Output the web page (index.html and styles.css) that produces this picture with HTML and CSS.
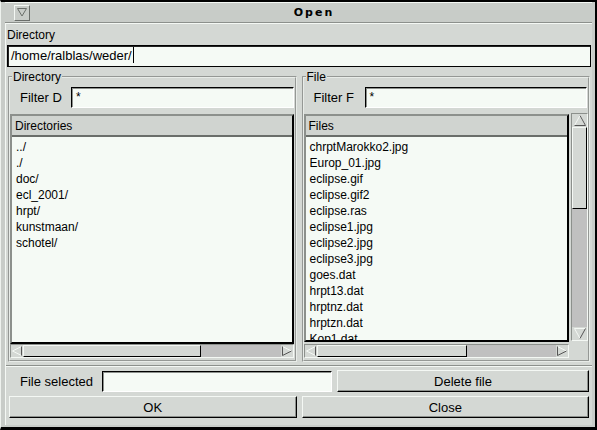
FILE: index.html
```html
<!DOCTYPE html>
<html lang="en">
  <head>
    <meta charset="UTF-8" />
    <meta name="viewport" content="width=device-width, initial-scale=1.0" />
    <title>Open</title>
    <link rel="stylesheet" href="styles.css">
  </head>
  <body>
    <div class="window">
      <div class="titlebar">
        <span class="menu-btn">
          <svg width="10" height="9" viewBox="0 0 10 9">
            <path d="M0.5 0.5 H9.5 L5 8 Z" fill="none" stroke="#6a6e6a" />
          </svg>
        </span>
        <span class="title">Open</span>
      </div>

      <div class="content">
        <div class="caption">Directory</div>
        <div class="entry path">/home/ralblas/weder/<span class="caret"></span></div>

        <div class="panes">
          <fieldset class="group">
            <legend>Directory</legend>
            <div class="filter">
              <span class="filter-label">Filter D</span>
              <div class="entry">*</div>
            </div>
            <div class="listbox">
              <div class="list">
                <div class="list-head">Directories</div>
                <div class="items">
                  <div>../</div>
                  <div>./</div>
                  <div>doc/</div>
                  <div>ecl_2001/</div>
                  <div>hrpt/</div>
                  <div>kunstmaan/</div>
                  <div>schotel/</div>
                </div>
              </div>
              <div class="hscroll">
                <span class="arrow left"></span>
                <span class="thumb" style="width: 178px"></span>
                <span class="trough"></span>
                <span class="arrow right"></span>
              </div>
            </div>
          </fieldset>

          <fieldset class="group">
            <legend>File</legend>
            <div class="filter">
              <span class="filter-label">Filter F</span>
              <div class="entry">*</div>
            </div>
            <div class="listbox with-v">
              <div class="list-row">
                <div class="list">
                  <div class="list-head">Files</div>
                  <div class="items">
                    <div>chrptMarokko2.jpg</div>
                    <div>Europ_01.jpg</div>
                    <div>eclipse.gif</div>
                    <div>eclipse.gif2</div>
                    <div>eclipse.ras</div>
                    <div>eclipse1.jpg</div>
                    <div>eclipse2.jpg</div>
                    <div>eclipse3.jpg</div>
                    <div>goes.dat</div>
                    <div>hrpt13.dat</div>
                    <div>hrptnz.dat</div>
                    <div>hrptzn.dat</div>
                    <div>Kop1.dat</div>
                  </div>
                </div>
                <div class="vscroll">
                  <span class="arrow up"></span>
                  <span class="thumb" style="height: 82px"></span>
                  <span class="trough"></span>
                  <span class="arrow down"></span>
                </div>
              </div>
              <div class="hscroll">
                <span class="arrow left"></span>
                <span class="thumb" style="width: 150px"></span>
                <span class="trough"></span>
                <span class="arrow right"></span>
              </div>
            </div>
          </fieldset>
        </div>

        <div class="actions">
          <div class="action-row">
            <span class="filter-label selected-label">File selected</span>
            <div class="entry selected"></div>
            <button class="btn delete">Delete file</button>
          </div>
          <div class="action-row">
            <button class="btn">OK</button>
            <button class="btn">Close</button>
          </div>
        </div>
      </div>
    </div>
  </body>
</html>
```

FILE: styles.css
```css
* {
  box-sizing: border-box;
  margin: 0;
  padding: 0;
}
body {
  font-family: "Liberation Sans", Arial, Helvetica, sans-serif;
  font-size: 12px;
  color: #000;
  background-color: #000;
  width: 597px;
  height: 430px;
  overflow: hidden;
}

/* outer window frame */
.window {
  width: 597px;
  height: 430px;
  background-color: #c8ccc8;
  border-top: 2px solid #000;
  border-right: 2px solid #000;
  border-bottom: 3px solid #000;
  border-left: 1px solid #eef2ee;
  padding: 0 3px 2px 4px;
  display: flex;
  flex-direction: column;
}

.titlebar {
  height: 21px;
  display: flex;
  align-items: center;
  border-top: 1px solid #f4f8f4;
  border-bottom: 1px solid #8c908c;
  box-shadow: 0 1px 0 #f4f8f4;
}
.menu-btn {
  width: 16px;
  height: 16px;
  margin-left: 9px;
  border-top: 1px solid #f4f8f4;
  border-left: 1px solid #f4f8f4;
  border-right: 1px solid #6a6e6a;
  border-bottom: 1px solid #6a6e6a;
  display: flex;
  align-items: center;
  justify-content: center;
}
.title {
  flex: 1;
  text-align: center;
  font-family: "DejaVu Sans", sans-serif;
  font-weight: bold;
  font-size: 11px;
  letter-spacing: 2px;
  padding-left: 6px;
}

.content {
  flex: 1;
  background-color: #d4d8d4;
  border-left: 1px solid #f4f8f4;
  margin-top: 1px;
  display: flex;
  flex-direction: column;
  padding-top: 3px;
}
.caption {
  height: 18px;
  line-height: 16px;
  padding-left: 1px;
}

/* text entries */
.entry {
  height: 21px;
  background-color: #f5faf5;
  border-top: 1px solid #000;
  border-left: 1px solid #000;
  border-right: 1px solid #fff;
  border-bottom: 1px solid #fff;
  box-shadow: inset 1px 1px 0 #8c908c;
  line-height: 19px;
  padding-left: 4px;
  font-size: 12px;
  white-space: nowrap;
}
.entry.path {
  height: 22px;
  border: 1px solid #000;
  box-shadow: inset 1px 1px 0 #222;
  font-size: 13px;
  line-height: 20px;
  padding-left: 3px;
  margin-right: 1px;
  margin-left: 1px;
}
.caret {
  display: inline-block;
  width: 1px;
  height: 16px;
  background-color: #000;
  vertical-align: -3px;
  margin-left: 1px;
}

.panes {
  display: flex;
  gap: 5px;
  padding: 3px 2px 0 2px;
}
.group {
  flex: 1;
  border: 2px groove #e8ece8;
  min-width: 0;
  padding: 0;
  height: 292px;
}
.group legend {
  margin-left: 2px;
  padding: 0 1px;
  line-height: 14px;
  font-size: 12px;
}
.filter {
  display: flex;
  align-items: center;
  height: 21px;
  margin-top: 3px;
  padding-left: 10px;
}
.filter-label {
  width: 51px;
  font-size: 13px;
}
.filter .entry {
  flex: 1;
  margin-right: 1px;
}

.listbox {
  margin-top: 6px;
  display: flex;
  flex-direction: column;
}
.list-row {
  display: flex;
}
.list {
  height: 230px;
  border-top: 2px solid #8c908c;
  border-left: 2px solid #8c908c;
  border-right: 2px solid #000;
  border-bottom: 2px solid #000;
  background-color: #f5faf5;
  overflow: hidden;
}
.listbox > .list {
  flex: none;
  margin-right: 1px;
}
.list-row .list {
  flex: 1;
  height: 228px;
}
.list-head {
  height: 21px;
  line-height: 20px;
  padding-left: 3px;
  background-color: #d0d4d0;
  border-bottom: 2px solid #6a6e6a;
  font-size: 12px;
}
.items {
  padding: 2px 0 0 4px;
  line-height: 16px;
  font-size: 12px;
}

/* scrollbars */
.hscroll {
  height: 14px;
  margin-right: 1px;
  display: flex;
  border: 1px solid #f4f8f4;
  border-top-color: #8c908c;
  border-left-color: #8c908c;
  background-color: #c0c0c0;
}
.with-v .hscroll {
  margin-top: 2px;
  margin-right: 19px;
}
.vscroll {
  width: 17px;
  margin-left: 2px;
  margin-top: -1px;
  height: 228px;
  display: flex;
  flex-direction: column;
  border: 1px solid #f4f8f4;
  border-top-color: #8c908c;
  border-left-color: #8c908c;
  background-color: #c0c0c0;
}
.thumb {
  background-color: #d4d8d4;
  border-top: 1px solid #f4f8f4;
  border-left: 1px solid #f4f8f4;
  border-right: 1px solid #000;
  border-bottom: 1px solid #000;
}
.trough {
  flex: 1;
}
.arrow {
  width: 12px;
  height: 12px;
  background-color: #d4d8d4;
  position: relative;
  flex: none;
}
.vscroll .arrow {
  width: 15px;
  height: 13px;
}
.arrow::after {
  content: "";
  position: absolute;
  inset: 0;
  background-repeat: no-repeat;
  background-position: center;
}
.arrow.left::after {
  background-image: url("data:image/svg+xml,%3Csvg xmlns='http://www.w3.org/2000/svg' width='10' height='10'%3E%3Cpath d='M9.5 0.5 L0.5 5 L9.5 9.5' fill='none' stroke='%23f4f8f4'/%3E%3Cpath d='M9.5 0.5 V9.5' stroke='%23555'/%3E%3C/svg%3E");
}
.arrow.right::after {
  background-image: url("data:image/svg+xml,%3Csvg xmlns='http://www.w3.org/2000/svg' width='10' height='10'%3E%3Cpath d='M0.5 0.5 L9.5 5' stroke='%23f4f8f4'/%3E%3Cpath d='M0.5 0.5 V9.5 L9.5 5' fill='none' stroke='%23555'/%3E%3C/svg%3E");
}
.arrow.up::after {
  background-image: url("data:image/svg+xml,%3Csvg xmlns='http://www.w3.org/2000/svg' width='12' height='11'%3E%3Cpath d='M0.5 10.5 L6 0.5 L11.5 10.5' fill='none' stroke='%23f4f8f4'/%3E%3Cpath d='M0.5 10.5 H11.5 L6 0.5' fill='none' stroke='%23555'/%3E%3C/svg%3E");
}
.arrow.down::after {
  background-image: url("data:image/svg+xml,%3Csvg xmlns='http://www.w3.org/2000/svg' width='12' height='11'%3E%3Cpath d='M11.5 0.5 H0.5 L6 10.5' fill='none' stroke='%23f4f8f4'/%3E%3Cpath d='M11.5 0.5 L6 10.5' fill='none' stroke='%23555'/%3E%3C/svg%3E");
}

/* bottom area with selection and buttons */
.actions {
  flex: 1;
  margin-top: 4px;
  border-top: 1px solid #f4f8f4;
  box-shadow: 0 -1px 0 #8c908c;
  padding: 3px 3px 0 3px;
  display: flex;
  flex-direction: column;
  gap: 4px;
}
.action-row {
  display: flex;
  align-items: center;
  gap: 5px;
  height: 22px;
}
.selected-label {
  width: 88px;
  padding-left: 11px;
  font-size: 13px;
}
.entry.selected {
  width: 230px;
  margin-right: 0;
}
.btn {
  flex: 1;
  height: 22px;
  font-family: "Liberation Sans", Arial, Helvetica, sans-serif;
  font-size: 13px;
  background-color: #d4d8d4;
  border-top: 1px solid #f4f8f4;
  border-left: 1px solid #f4f8f4;
  border-right: 1px solid #000;
  border-bottom: 1px solid #000;
  box-shadow: inset -1px -1px 0 #8c908c;
  color: #000;
}
```
